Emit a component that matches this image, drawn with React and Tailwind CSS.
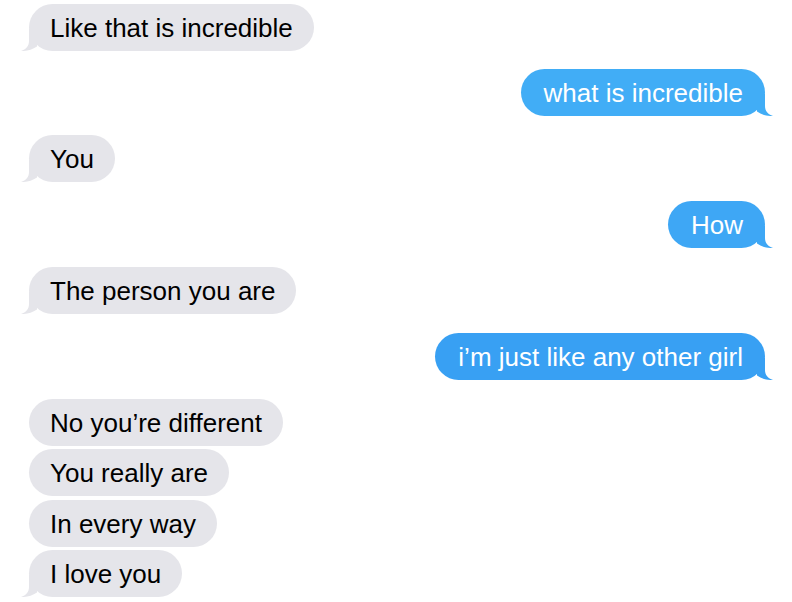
import React from 'react'

const messages = [
  { text: 'Like that is incredible', me: false, tail: true, gap: 0 },
  { text: 'what is incredible', me: true, tail: true, gap: 18, color: 'bg-[#41adf6]', fill: '#41adf6' },
  { text: 'You', me: false, tail: true, gap: 19 },
  { text: 'How', me: true, tail: true, gap: 19, color: 'bg-[#3ea7f5]', fill: '#3ea7f5' },
  { text: 'The person you are', me: false, tail: true, gap: 19 },
  { text: 'i’m just like any other girl', me: true, tail: true, gap: 19, color: 'bg-[#38a0f3]', fill: '#38a0f3' },
  { text: 'No you’re different', me: false, tail: false, gap: 19 },
  { text: 'You really are', me: false, tail: false, gap: 3 },
  { text: 'In every way', me: false, tail: false, gap: 4 },
  { text: 'I love you', me: false, tail: true, gap: 3 },
]

function Tail({ fill, right }) {
  return (
    <svg
      viewBox="0 0 30 22"
      className={
        right
          ? 'absolute right-[-8px] bottom-0 w-[30px] h-[22px] -scale-x-100'
          : 'absolute left-[-8px] bottom-0 w-[30px] h-[22px]'
      }
    >
      <path d="M8 0 L8 12 C8 17 5 20.5 0 22 C5 22.3 11 21 16 17.5 L16 0 Z" fill={fill} />
    </svg>
  )
}

function Bubble({ msg }) {
  const bg = msg.me ? msg.color : 'bg-[#e5e5ea]'
  const fill = msg.me ? msg.fill : '#e5e5ea'
  const pad = msg.me ? 'pl-[23px] pr-[22px] text-white' : 'px-[21px] text-black'
  return (
    <div className={msg.me ? 'flex justify-end pr-[27px]' : 'flex justify-start pl-[29px]'} style={{ marginTop: msg.gap }}>
      <div className={`relative h-[47px] rounded-full pt-[2px] text-[26px] leading-[45px] whitespace-nowrap ${bg} ${pad}`}>
        {msg.tail && <Tail fill={fill} right={msg.me} />}
        <span className="relative">{msg.text}</span>
      </div>
    </div>
  )
}

export default function App() {
  return (
    <div
      className="w-[792px] h-[602px] overflow-hidden bg-white pt-[4px]"
      style={{ fontFamily: '"Liberation Sans", Arial, sans-serif' }}
    >
      {messages.map((m, i) => (
        <Bubble key={i} msg={m} />
      ))}
    </div>
  )
}
